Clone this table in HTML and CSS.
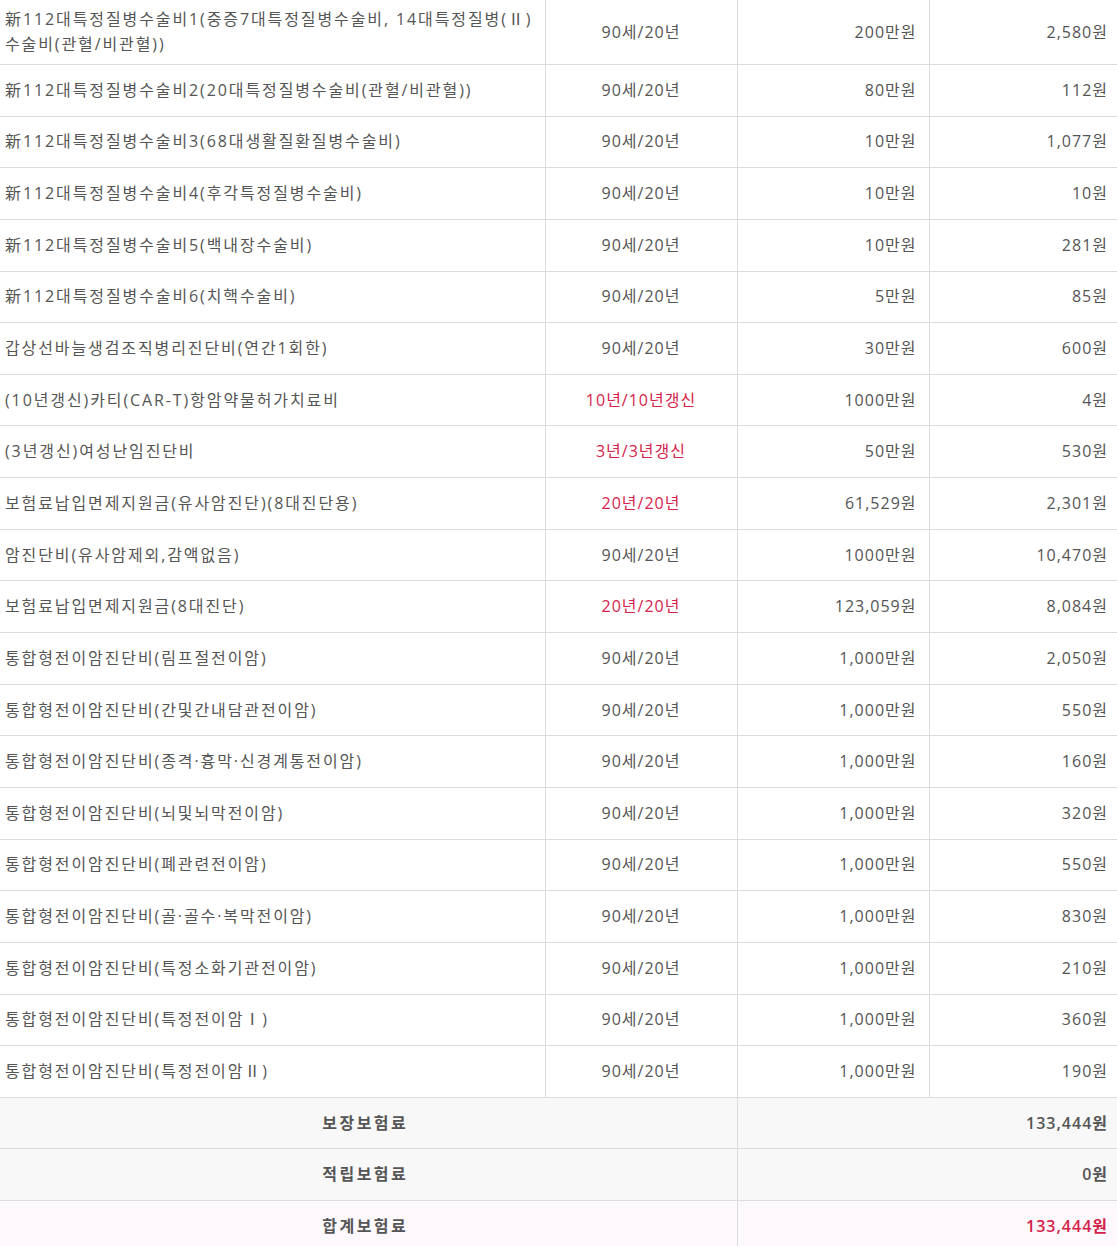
FILE: index.html
```html
<!DOCTYPE html>
<html lang="ko">
<head>
    <meta charset="UTF-8">
    <meta name="viewport" content="width=device-width, initial-scale=1.0">
    <title>보장내역</title>
    <link rel="stylesheet" href="styles.css">
</head>
<body>
    <table class="cover-table">
        <colgroup>
            <col class="col-name">
            <col class="col-term">
            <col class="col-amount">
            <col class="col-premium">
        </colgroup>
        <tbody>
            <tr class="first-row">
                <td class="name">新112대특정질병수술비1(중증7대특정질병수술비, 14대특정질병(Ⅱ)수술비(관혈/비관혈))</td>
                <td class="term">90세/20년</td>
                <td class="num">200만원</td>
                <td class="num">2,580원</td>
            </tr>
            <tr>
                <td class="name">新112대특정질병수술비2(20대특정질병수술비(관혈/비관혈))</td>
                <td class="term">90세/20년</td>
                <td class="num">80만원</td>
                <td class="num">112원</td>
            </tr>
            <tr>
                <td class="name">新112대특정질병수술비3(68대생활질환질병수술비)</td>
                <td class="term">90세/20년</td>
                <td class="num">10만원</td>
                <td class="num">1,077원</td>
            </tr>
            <tr>
                <td class="name">新112대특정질병수술비4(후각특정질병수술비)</td>
                <td class="term">90세/20년</td>
                <td class="num">10만원</td>
                <td class="num">10원</td>
            </tr>
            <tr>
                <td class="name">新112대특정질병수술비5(백내장수술비)</td>
                <td class="term">90세/20년</td>
                <td class="num">10만원</td>
                <td class="num">281원</td>
            </tr>
            <tr>
                <td class="name">新112대특정질병수술비6(치핵수술비)</td>
                <td class="term">90세/20년</td>
                <td class="num">5만원</td>
                <td class="num">85원</td>
            </tr>
            <tr>
                <td class="name">갑상선바늘생검조직병리진단비(연간1회한)</td>
                <td class="term">90세/20년</td>
                <td class="num">30만원</td>
                <td class="num">600원</td>
            </tr>
            <tr>
                <td class="name">(10년갱신)카티(CAR-T)항암약물허가치료비</td>
                <td class="term red">10년/10년갱신</td>
                <td class="num">1000만원</td>
                <td class="num">4원</td>
            </tr>
            <tr>
                <td class="name">(3년갱신)여성난임진단비</td>
                <td class="term red">3년/3년갱신</td>
                <td class="num">50만원</td>
                <td class="num">530원</td>
            </tr>
            <tr>
                <td class="name">보험료납입면제지원금(유사암진단)(8대진단용)</td>
                <td class="term red">20년/20년</td>
                <td class="num">61,529원</td>
                <td class="num">2,301원</td>
            </tr>
            <tr>
                <td class="name">암진단비(유사암제외,감액없음)</td>
                <td class="term">90세/20년</td>
                <td class="num">1000만원</td>
                <td class="num">10,470원</td>
            </tr>
            <tr>
                <td class="name">보험료납입면제지원금(8대진단)</td>
                <td class="term red">20년/20년</td>
                <td class="num">123,059원</td>
                <td class="num">8,084원</td>
            </tr>
            <tr>
                <td class="name">통합형전이암진단비(림프절전이암)</td>
                <td class="term">90세/20년</td>
                <td class="num">1,000만원</td>
                <td class="num">2,050원</td>
            </tr>
            <tr>
                <td class="name">통합형전이암진단비(간및간내담관전이암)</td>
                <td class="term">90세/20년</td>
                <td class="num">1,000만원</td>
                <td class="num">550원</td>
            </tr>
            <tr>
                <td class="name">통합형전이암진단비(종격·흉막·신경계통전이암)</td>
                <td class="term">90세/20년</td>
                <td class="num">1,000만원</td>
                <td class="num">160원</td>
            </tr>
            <tr>
                <td class="name">통합형전이암진단비(뇌및뇌막전이암)</td>
                <td class="term">90세/20년</td>
                <td class="num">1,000만원</td>
                <td class="num">320원</td>
            </tr>
            <tr>
                <td class="name">통합형전이암진단비(폐관련전이암)</td>
                <td class="term">90세/20년</td>
                <td class="num">1,000만원</td>
                <td class="num">550원</td>
            </tr>
            <tr>
                <td class="name">통합형전이암진단비(골·골수·복막전이암)</td>
                <td class="term">90세/20년</td>
                <td class="num">1,000만원</td>
                <td class="num">830원</td>
            </tr>
            <tr>
                <td class="name">통합형전이암진단비(특정소화기관전이암)</td>
                <td class="term">90세/20년</td>
                <td class="num">1,000만원</td>
                <td class="num">210원</td>
            </tr>
            <tr>
                <td class="name">통합형전이암진단비(특정전이암Ⅰ)</td>
                <td class="term">90세/20년</td>
                <td class="num">1,000만원</td>
                <td class="num">360원</td>
            </tr>
            <tr>
                <td class="name">통합형전이암진단비(특정전이암Ⅱ)</td>
                <td class="term">90세/20년</td>
                <td class="num">1,000만원</td>
                <td class="num">190원</td>
            </tr>

            <!-- 합계 -->
            <tr class="sum-row">
                <td class="sum-label" colspan="2">보장보험료</td>
                <td class="sum-value" colspan="2">133,444원</td>
            </tr>
            <tr class="sum-row">
                <td class="sum-label" colspan="2">적립보험료</td>
                <td class="sum-value" colspan="2">0원</td>
            </tr>
            <tr class="sum-row total-row">
                <td class="sum-label" colspan="2">합계보험료</td>
                <td class="sum-value red" colspan="2">133,444원</td>
            </tr>
        </tbody>
    </table>
</body>
</html>
```

FILE: styles.css
```css
:root {
    --text: #555;
    --line: #dcdcdc;
    --red: #d5224b;
    --sum-bg: #f8f8f8;
    --total-bg: #fcf8fb;
}

* {
    margin: 0;
    padding: 0;
    box-sizing: border-box;
}

body {
    font-family: 'Open Sans', 'Noto Sans CJK KR', sans-serif;
    font-size: 16px;
    letter-spacing: 1px;
    color: var(--text);
    background: #fff;
    overflow: hidden;
}

.cover-table {
    width: 1120px;
    table-layout: fixed;
    border-collapse: collapse;
}

.col-name { width: 545px; }
.col-term { width: 192px; }
.col-amount { width: 192px; }
.col-premium { width: 191px; }

td {
    height: 51.65px;
    padding: 7px 12px;
    line-height: 25px;
    border: 1px solid var(--line);
    vertical-align: middle;
}

/* 좌우 바깥 테두리 없음 */
td:first-child { border-left: 0; }
td:last-child { border-right: 0; }

.first-row td { border-top: 0; }

.name {
    padding-left: 5px;
    padding-right: 0;
    letter-spacing: 1.9px;
}

.term { text-align: center; }
.num { text-align: right; }

.red { color: var(--red); }

/* 합계 영역 */
.sum-row td {
    background: var(--sum-bg);
    font-weight: 600;
}

.sum-label {
    text-align: center;
    padding-right: 18px;
    letter-spacing: 2.5px;
}

.sum-value { text-align: right; }

.total-row td {
    background: var(--total-bg);
    border-bottom: 0;
}
```
